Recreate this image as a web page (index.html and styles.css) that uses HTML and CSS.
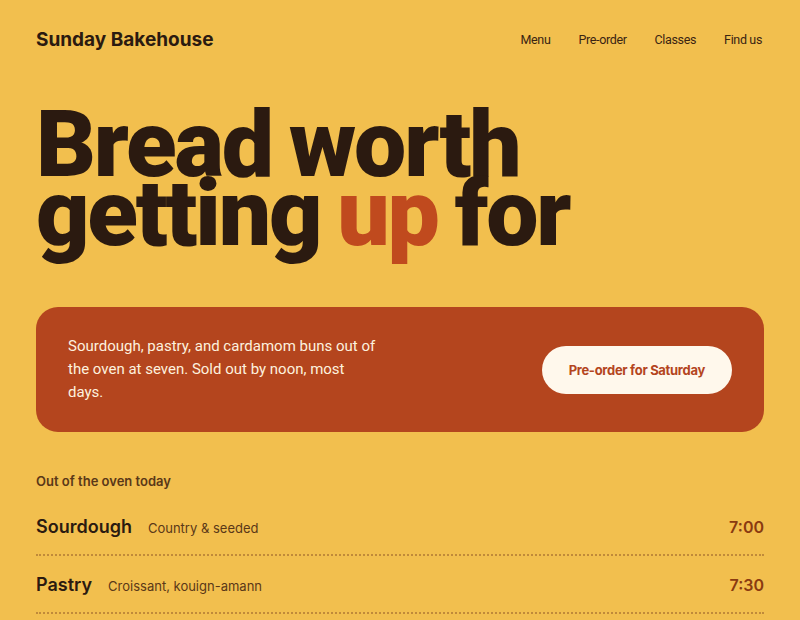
FILE: index.html
```html
<!DOCTYPE html>
<html lang="en">
<head>
<meta charset="utf-8">
<title>Sunday Bakehouse</title>
<link rel="stylesheet" href="styles.css">
</head>
<body>
<div class="page">
  <header class="top">
    <div class="logo">Sunday Bakehouse</div>
    <nav class="nav">
      <a href="#">Menu</a>
      <a href="#">Pre-order</a>
      <a href="#">Classes</a>
      <a href="#">Find us</a>
    </nav>
  </header>
  <h1 class="hero">Bread worth<br>getting <span class="accent">up</span> for</h1>
  <section class="card">
    <p class="card-text">Sourdough, pastry, and cardamom buns out of the oven at seven. Sold out by noon, most days.</p>
    <a class="btn" href="#">Pre-order for Saturday</a>
  </section>
  <section class="today">
    <h2 class="today-title">Out of the oven today</h2>
    <ul class="list">
      <li class="row"><span class="name">Sourdough</span><span class="desc">Country &amp; seeded</span><span class="time">7:00</span></li>
      <li class="row"><span class="name">Pastry</span><span class="desc">Croissant, kouign-amann</span><span class="time">7:30</span></li>
    </ul>
  </section>
</div>
</body>
</html>
```

FILE: styles.css
```css
* { box-sizing: border-box; }
html, body { margin: 0; padding: 0; }
body {
  background: #F2BF4E;
  color: #2B1A10;
  font-family: "Inter", "Liberation Sans", sans-serif;
  overflow: hidden;
}
.page {
  padding: 0 36px;
}
.top {
  display: flex;
  justify-content: space-between;
  align-items: center;
  height: 78px;
}
.logo {
  font-size: 19px;
  font-weight: 700;
}
.nav {
  display: flex;
  gap: 28px;
  padding-right: 2px;
}
.nav a {
  color: #3A2412;
  text-decoration: none;
  font-family: "Roboto", "Liberation Sans", sans-serif;
  font-size: 12.5px;
  letter-spacing: -0.35px;
}
.hero {
  margin: 32px 0 0;
  font-family: "Roboto", "Liberation Sans", sans-serif;
  font-size: 93px;
  font-weight: 900;
  line-height: 69px;
  letter-spacing: -2.2px;
  word-spacing: -4px;
  color: #2B1A10;
}
.accent { color: #C04A1E; }
.card {
  margin-top: 59px;
  background: #B4451E;
  border-radius: 22px;
  padding: 28px 32px;
  display: flex;
  align-items: center;
  justify-content: space-between;
}
.card-text {
  margin: 0;
  max-width: 310px;
  font-family: "Roboto", "Liberation Sans", sans-serif;
  font-size: 15px;
  line-height: 23px;
  color: #FDF1DE;
}
.btn {
  background: #FFF8EC;
  color: #B4451E;
  text-decoration: none;
  font-size: 13px;
  font-weight: 700;
  letter-spacing: -0.3px;
  height: 48px;
  padding: 0 27px;
  border-radius: 24px;
  display: flex;
  align-items: center;
}
.today { margin-top: 41px; }
.today-title {
  margin: 0 0 9px;
  font-size: 13px;
  font-weight: 600;
  color: #5A3818;
}
.list { list-style: none; margin: 0; padding: 0; }
.row {
  display: flex;
  align-items: baseline;
  height: 58px;
  padding-top: 18px;
  border-bottom: 2px dotted #C08A3A;
}
.name {
  font-size: 18px;
  font-weight: 600;
  color: #2B1A10;
}
.desc {
  margin-left: 16px;
  font-size: 13px;
  color: #5A3818;
}
.time {
  margin-left: auto;
  font-size: 16px;
  font-weight: 600;
  color: #8A3A10;
}
```
